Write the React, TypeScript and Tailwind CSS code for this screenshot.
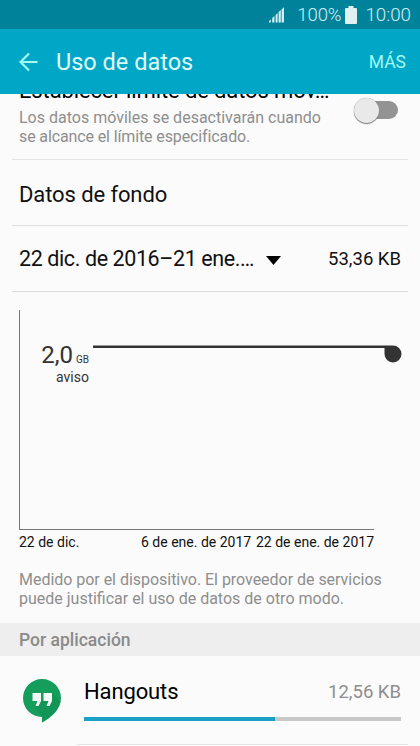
type AppUsage = {
  name: string;
  amount: string;
  percent: number;
};

const apps: AppUsage[] = [{ name: 'Hangouts', amount: '12,56 KB', percent: 60.2 }];

const dates = ['22 de dic.', '6 de ene. de 2017', '22 de ene. de 2017'];

function StatusBar() {
  return (
    <div className="flex h-[29px] shrink-0 items-center justify-end bg-[#00829b] pt-px pr-[9px] text-[#d3eef2]">
      <svg className="mr-[12px] h-4 w-4" viewBox="0 0 16 16" fill="currentColor">
        <path d="M0 15.500v-1.500l1.800-1.500v3zM3.200 15.500v-4.500l2.200-2v6.500zM6.600 15.500v-7.500l2-2v9.500zM9.600 15.500v-10.500l2.200-2v12.500zM12.600 15.500v-13.200l2.400-2v15.200z" />
      </svg>
      <span className="text-[18.500px] leading-[28px] font-light tracking-[-0.1px]">100%</span>
      <svg className="mr-[8px] ml-[4px] h-[18px] w-[12px]" viewBox="0 0 12 18" fill="#e3f0f2">
        <path d="M3.500 0h5v2h2.500a1 1 0 0 1 1 1v14a1 1 0 0 1-1 1H1a1 1 0 0 1-1-1V3a1 1 0 0 1 1-1h2.500z" />
      </svg>
      <span className="text-[18.800px] leading-[28px] font-light">10:00</span>
    </div>
  );
}

function Header() {
  return (
    <header className="flex h-[65px] shrink-0 items-center bg-[#00a6c6] pt-px pr-[14px] pl-[19px]">
      <svg className="h-5 w-[19px]" viewBox="0 0 19 20" fill="none" stroke="#a0fbf6" strokeWidth="2.2">
        <path d="M10 1.500 1.500 10l8.500 8.500M1.500 10H18.500" />
      </svg>
      <h1 className="mt-px ml-[18px] flex-1 text-[23.500px] text-[#e0fcfb]">Uso de datos</h1>
      <button className="text-[17.500px] text-[#a0fbf6]">MÁS</button>
    </header>
  );
}

function LimitRow() {
  return (
    <div className="mx-3 flex h-[66px] overflow-hidden border-b border-[#e4e4e4] pl-[7px]">
      <div className="-mt-[16px] flex-1 whitespace-nowrap">
        <p className="text-[22px] leading-[26px] tracking-[-0.13px] text-black">Establecer límite de datos móv…</p>
        <p className="mt-[4px] text-[16px] leading-[19px] text-[#8e8e8e]">
          Los datos móviles se desactivarán cuando
          <br />
          <span className="tracking-[-0.12px]">se alcance el límite especificado.</span>
        </p>
      </div>
      <div className="relative mt-[7px] mr-[10px] h-[18px] w-[42px] rounded-full bg-[#939393]">
        <span className="absolute -top-[3px] -left-[2px] h-[25px] w-[25px] rounded-full bg-[#e9e9e9] shadow-[0_1px_1px_#777,0_0_1px_#888]" />
      </div>
    </div>
  );
}

function UsageChart() {
  return (
    <div className="mt-[18px] ml-[19px] w-[355px]">
      <div className="relative h-[220px] border-b border-l border-[#777] text-[#333]">
        <div className="absolute top-[31px] right-[285px] text-right whitespace-nowrap">
          <p className="leading-[28px]">
            <span className="text-[24px]">2,0</span>
            <span className="ml-[3px] text-[10px]">GB</span>
          </p>
          <p className="-mt-[5px] text-[14px] leading-4">aviso</p>
        </div>
        <svg className="absolute top-[35px] left-[73px] h-[18px] w-[310px]" viewBox="0 0 310 18" fill="#333">
          <path d="M0 .4h300a8.500 8.500 0 1 1-8.500 8.500V3H0z" />
        </svg>
      </div>
      <div className="mt-[4px] flex text-[14px] leading-4 whitespace-nowrap text-[#111]">
        <span className="w-[122px]">{dates[0]}</span>
        <span>{dates[1]}</span>
        <span className="ml-auto">{dates[2]}</span>
      </div>
    </div>
  );
}

function HangoutsIcon() {
  return (
    <svg className="ml-[23px] h-[44px] w-[38px]" viewBox="0 0 38 44">
      <path d="M19 0a19 19 0 0 0 0 38v5.500C28 38.500 38 30.500 38 19A19 19 0 0 0 19 0z" fill="#159d5c" />
      <path d="m18 22 11-8 8.500 8.500C35 32 28 39 19 43.500V38l-8-11z" fill="#118a50" opacity="0.4" />
      <path d="M9.500 14H18v8l-2.500 5h-3l2-5h-5zM20.500 14H29v8l-2.500 5h-3l2-5h-5z" fill="#f3faf6" />
    </svg>
  );
}

function AppRow({ app }: { app: AppUsage }) {
  return (
    <div className="flex items-start">
      <div className="pt-[23px]">
        <HangoutsIcon />
      </div>
      <div className="ml-[16px] mr-3 flex-1 border-b border-[#e4e4e4] pt-[22px] pb-[23px]">
        <div className="mr-[7px] ml-[7px] flex items-center justify-between">
          <span className="text-[22px] leading-7 tracking-[-0.12px] text-black">{app.name}</span>
          <span className="text-[18.500px] leading-7 text-[#8e8e8e]">{app.amount}</span>
        </div>
        <div className="mt-[11px] mr-[7px] ml-[7px] h-1 bg-[#c8c8c8]">
          <div className="h-1 bg-[#1a9fc6]" style={{ width: `${app.percent}%` }} />
        </div>
      </div>
    </div>
  );
}

export default function App() {
  return (
    <div className="flex h-[746px] w-[420px] flex-col overflow-hidden bg-[#fbfbfb] font-['Roboto',sans-serif]">
      <StatusBar />
      <Header />
      <main>
        <LimitRow />
        <div className="mx-3 flex h-[66px] items-center border-b border-[#dedede] pt-[3px] pl-[7px] text-[22px] tracking-[-0.1px] text-[#111]">
          Datos de fondo
        </div>
        <div className="mx-3 flex h-[66px] items-center border-b border-[#dadada] px-[7px] pt-[2px] text-[#111]">
          <span className="text-[21.500px] tracking-[-0.4px] whitespace-nowrap">22 dic. de 2016–21 ene.…</span>
          <svg className="mt-px ml-[12px] h-[9px] w-[15px]" viewBox="0 0 15 9">
            <path d="M0 0h15L7.500 9z" />
          </svg>
          <span className="ml-auto text-[18.500px]">53,36 KB</span>
        </div>
        <UsageChart />
        <p className="mt-[20px] ml-[19px] text-[16px] leading-[19px] whitespace-nowrap text-[#8e8e8e]">
          <span className="tracking-[-0.03px]">Medido por el dispositivo. El proveedor de servicios</span>
          <br />
          puede justificar el uso de datos de otro modo.
        </p>
        <h2 className="mt-[15px] h-[33px] bg-[#eee] pl-[19px] text-[17.500px] leading-[34px] font-medium text-[#8a8a8a]">
          Por aplicación
        </h2>
        {apps.map((app) => (
          <AppRow key={app.name} app={app} />
        ))}
      </main>
    </div>
  );
}
